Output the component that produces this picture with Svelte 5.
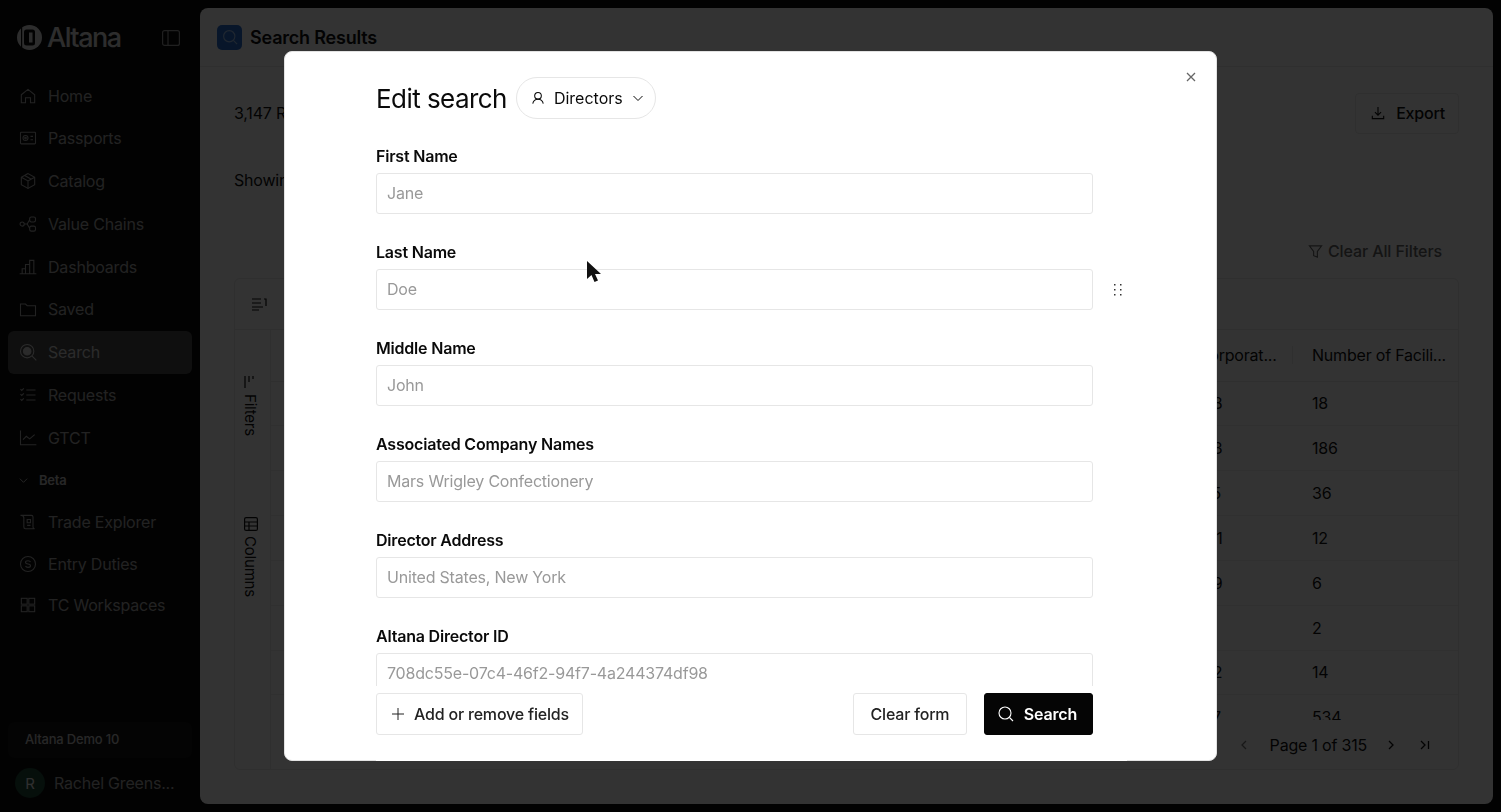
<script>
    const navTop = [
        { label: 'Home', icon: '<path d="M4 10.5 12 4l8 6.500V20h-5v-6H9v6H4z"/>' },
        { label: 'Passports', icon: '<rect x="3" y="5" width="18" height="14" rx="1"/><circle cx="9" cy="12" r="3"/><circle cx="9" cy="12" r="1"/><path d="M15 10h3M15 14h3"/>' },
        { label: 'Catalog', icon: '<path d="M12 3 4 7.500v9L12 21l8-4.500v-9z"/><path d="M4 7.500 12 12l8-4.500M12 12v9M8 5.300l8 4.500"/>' },
        { label: 'Value Chains', icon: '<circle cx="5" cy="12" r="2.500"/><rect x="14" y="3.500" width="7" height="6" rx="2"/><rect x="14" y="14.500" width="7" height="6" rx="2"/><path d="M7.500 12H11l3-5M11 12l3 5"/>' },
        { label: 'Dashboards', icon: '<path d="M2 20h20M5 20v-6h4v6M9 20V9h5v11M14 20V4h5v16"/>' },
        { label: 'Saved', icon: '<path d="M3 6h6l2 2h10v12H3z"/>' },
        { label: 'Search', active: true, icon: '<circle cx="11" cy="11" r="8"/><circle cx="11" cy="11" r="4.500" fill="currentColor"/><path d="m17 17 5 5"/>' },
        { label: 'Requests', icon: '<path d="M10 6h11M10 12h11M10 18h11M3 5l1.500 1.500L7 4M3 11l1.500 1.500L7 10M3 17l1.500 1.500L7 16"/>' },
        { label: 'GTCT', icon: '<path d="M3 3v17h19"/><path d="m6 14 4-4 4 3 6-5"/>' }
    ];
    const navBeta = [
        { label: 'Trade Explorer', icon: '<path d="M3 4h13a2 2 0 0 1 2 2v12a2 2 0 0 0 2 2H9a2 2 0 0 1-2-2V7a3 3 0 0 0-3-3M11 9h4v4h-4zM11 16h4"/>' },
        { label: 'Entry Duties', icon: '<circle cx="12" cy="12" r="9"/><path d="M15 9.500c-.5-1-1.500-1.500-3-1.500-2 0-3 .8-3 2s1 1.800 3 2 3 .8 3 2-1 2-3 2c-1.500 0-2.500-.5-3-1.500"/>' },
        { label: 'TC Workspaces', icon: '<rect x="4" y="4" width="7" height="7"/><rect x="13" y="4" width="7" height="7"/><rect x="4" y="13" width="7" height="7"/><rect x="13" y="13" width="7" height="7"/>' }
    ];
    const rows = [
        ['1968', '18'], ['1983', '186'], ['1975', '36'], ['2001', '12'],
        ['1999', '6'], ['N/A', '2'], ['2012', '14'], ['1977', '534']
    ];
    const fields = [
        { label: 'First Name', placeholder: 'Jane' },
        { label: 'Last Name', placeholder: 'Doe', handle: true },
        { label: 'Middle Name', placeholder: 'John' },
        { label: 'Associated Company Names', placeholder: 'Mars Wrigley Confectionery' },
        { label: 'Director Address', placeholder: 'United States, New York' },
        { label: 'Altana Director ID', placeholder: '708dc55e-07c4-46f2-94f7-4a244374df98' }
    ];
</script>

<div class="app">
    <aside class="sidebar">
        <div class="brand">
            <svg class="logo" viewBox="0 0 25 25" width="25" height="25">
                <circle cx="12.500" cy="12.500" r="12.500" fill="#e2e2e2"/>
                <rect x="7" y="4.500" width="11" height="16" rx="2.500" fill="#0c0c0c"/>
                <rect x="12" y="7.500" width="3.500" height="10" fill="#e2e2e2"/>
                <rect x="4" y="0" width="1.200" height="25" fill="#0c0c0c"/>
            </svg>
            <span class="wordmark">Altana</span>
            <svg class="toggle" viewBox="0 0 18 16" width="18" height="16" fill="none" stroke="currentColor" stroke-width="1.200">
                <rect x="0.600" y="0.600" width="16.800" height="14.800" rx="2"/>
                <path d="M6 1v14"/>
            </svg>
        </div>
        <nav class="nav">
            {#each navTop as item}
                <div class="nav-item" class:active={item.active}>
                    <svg viewBox="0 0 24 24" width="20" height="20" fill="none" stroke="currentColor" stroke-width="1.300">{@html item.icon}</svg>
                    <span>{item.label}</span>
                </div>
            {/each}
            <div class="nav-group">
                <svg viewBox="0 0 12 12" width="11" height="11" fill="none" stroke="currentColor" stroke-width="1"><path d="m2 4 4 4 4-4"/></svg>
                <span>Beta</span>
            </div>
            {#each navBeta as item}
                <div class="nav-item beta">
                    <svg viewBox="0 0 24 24" width="20" height="20" fill="none" stroke="currentColor" stroke-width="1.300">{@html item.icon}</svg>
                    <span>{item.label}</span>
                </div>
            {/each}
        </nav>
        <div class="side-foot">
            <div class="org">Altana Demo 10</div>
            <div class="user">
                <span class="avatar">R</span>
                <span class="user-name">Rachel Greens...</span>
            </div>
        </div>
    </aside>

    <main class="panel">
        <header class="panel-head">
            <span class="head-icon">
                <svg viewBox="0 0 24 24" width="18" height="18" fill="none" stroke="#9fc2ee" stroke-width="1.500"><circle cx="11" cy="11" r="7.500"/><path d="m16.500 16.500 5 5"/></svg>
            </span>
            <h1>Search Results</h1>
        </header>
        <div class="panel-body">
            <div class="results-row">
                <span class="results-count">3,147 Results</span>
                <button class="export">
                    <svg viewBox="0 0 16 16" width="14" height="14" fill="none" stroke="currentColor" stroke-width="1.300"><path d="M8 1v9M4.500 7 8 10.500 11.500 7M1.500 11v3.500h13V11"/></svg>
                    Export
                </button>
            </div>
            <div class="showing">Showing 1 to 10 of 3,147</div>
            <div class="filters-row">
                <span class="clear-filters">
                    <svg viewBox="0 0 16 16" width="15" height="15" fill="none" stroke="currentColor" stroke-width="1.200"><path d="M1.500 2h13L10 8v6l-4-1.500V8z"/></svg>
                    Clear All Filters
                </span>
            </div>
            <section class="table">
                <div class="table-tools">
                    <svg viewBox="0 0 16 16" width="16" height="16" fill="none" stroke="currentColor" stroke-width="1.200"><path d="M1 3h9M1 7h9M1 11h11M1 14h7M13 3h2v7"/></svg>
                </div>
                <div class="table-main">
                    <div class="rail">
                        <div class="rail-tab filters">
                            <svg viewBox="0 0 14 14" width="14" height="14" fill="none" stroke="currentColor" stroke-width="1.200"><path d="M1 1v12M5 1v6M9 1v3"/></svg>
                            Filters
                        </div>
                        <div class="rail-tab columns">
                            <svg viewBox="0 0 14 14" width="14" height="14" fill="none" stroke="currentColor" stroke-width="1.200"><rect x="0.600" y="0.600" width="12.800" height="12.800" rx="1.500"/><path d="M0.600 5h12.800M5 5v8.400M0.600 9h12.800"/></svg>
                            Columns
                        </div>
                    </div>
                    <div class="grid">
                        <div class="row head">
                            <div class="cell year">Incorporat...</div>
                            <div class="cell count">Number of Facili...</div>
                        </div>
                        <div class="grid-body">
                            {#each rows as row}
                                <div class="row">
                                    <div class="cell year">{row[0]}</div>
                                    <div class="cell count">{row[1]}</div>
                                </div>
                            {/each}
                        </div>
                        <div class="pager">
                            <svg viewBox="0 0 12 12" width="12" height="12" fill="none" stroke="#777" stroke-width="1.300"><path d="M8 2 4 6l4 4"/></svg>
                            <span>Page 1 of 315</span>
                            <svg class="next" viewBox="0 0 12 12" width="12" height="12" fill="none" stroke="currentColor" stroke-width="1.300"><path d="m4 2 4 4-4 4"/></svg>
                            <svg class="last" viewBox="0 0 12 12" width="12" height="12" fill="none" stroke="currentColor" stroke-width="1.300"><path d="m2 2 4 4-4 4M9.500 2v8"/></svg>
                        </div>
                    </div>
                </div>
            </section>
        </div>
    </main>

    <div class="overlay">
        <div class="modal">
            <button class="close" aria-label="Close">
                <svg viewBox="0 0 10 10" width="10" height="10" fill="none" stroke="currentColor" stroke-width="1.300"><path d="m1 1 8 8M9 1 1 9"/></svg>
            </button>
            <div class="modal-scroll">
                <div class="modal-title">
                    <h2>Edit search</h2>
                    <button class="chip">
                        <svg viewBox="0 0 16 16" width="14" height="14" fill="none" stroke="currentColor" stroke-width="1.200"><circle cx="8" cy="5.500" r="3.800"/><path d="M2 14.500c.6-3 2.600-5 6-5s5.400 2 6 5"/></svg>
                        <span>Directors</span>
                        <svg viewBox="0 0 12 12" width="12" height="12" fill="none" stroke="currentColor" stroke-width="1"><path d="m1.500 4 4.500 4.500L10.500 4"/></svg>
                    </button>
                </div>
                {#each fields as field}
                    <div class="field">
                        <label for={field.label}>{field.label}</label>
                        <div class="field-row">
                            <input id={field.label} placeholder={field.placeholder} />
                            {#if field.handle}
                                <svg class="handle" viewBox="0 0 8 12" width="8" height="12" fill="#333">
                                    <rect x="0" y="0" width="1.500" height="1.500"/><rect x="6" y="0" width="1.500" height="1.500"/>
                                    <rect x="0" y="5" width="1.500" height="1.500"/><rect x="6" y="5" width="1.500" height="1.500"/>
                                    <rect x="0" y="10" width="1.500" height="1.500"/><rect x="6" y="10" width="1.500" height="1.500"/>
                                </svg>
                            {/if}
                        </div>
                    </div>
                {/each}
            </div>
            <div class="modal-foot">
                <button class="btn add">
                    <svg viewBox="0 0 14 14" width="14" height="14" fill="none" stroke="currentColor" stroke-width="1"><path d="M7 1v12M1 7h12"/></svg>
                    Add or remove fields
                </button>
                <span class="foot-space"></span>
                <button class="btn clear">Clear form</button>
                <button class="btn primary">
                    <svg viewBox="0 0 16 16" width="16" height="16" fill="none" stroke="currentColor" stroke-width="1.100"><circle cx="7" cy="7" r="6"/><path d="m11.500 11.500 3.500 3.500"/></svg>
                    Search
                </button>
            </div>
        </div>
        <svg class="cursor" viewBox="0 0 14 23" width="14" height="23" fill="#111"><path d="M0 0v18l4.500-4 3 7 3.500-1.500-3-6.500H14z"/></svg>
    </div>
</div>

<style>
    :global(body) {
        margin: 0;
        font-family: Inter, "Noto Sans", sans-serif;
        background: #0c0c0c;
    }

    button {
        font: inherit;
        letter-spacing: inherit;
        background: none;
        border: none;
        padding: 0;
        color: inherit;
    }

    .app {
        position: relative;
        display: flex;
        width: 1501px;
        height: 812px;
        overflow: hidden;
        background: #0c0c0c;
        letter-spacing: -0.2px;
    }

    /* sidebar */
    .sidebar {
        width: 200px;
        flex: none;
        display: flex;
        flex-direction: column;
        color: #ababab;
    }

    .brand {
        display: flex;
        align-items: center;
        height: 25px;
        padding: 25px 20px 0 17px;
    }

    .wordmark {
        margin-left: 5px;
        font-size: 27px;
        font-weight: 500;
        letter-spacing: -1.500px;
        color: #e2e2e2;
    }

    .toggle {
        margin-left: auto;
        color: #a0a0a0;
    }

    .nav {
        margin-top: 24.300px;
        padding: 0 8px;
    }

    .nav-item {
        display: flex;
        align-items: center;
        gap: 10px;
        height: 42.750px;
        padding-left: 10px;
        border-radius: 6px;
        font-size: 16px;
    }

    .nav-item.beta {
        height: 41.500px;
    }

    .nav-item.active {
        background: #4c4c4c;
        color: #d4d4d4;
    }

    .nav-item svg {
        flex: none;
    }

    .nav-group {
        display: flex;
        align-items: center;
        gap: 10px;
        height: 42.500px;
        padding-left: 10px;
        font-size: 13px;
        font-weight: 600;
        color: #c4c4c4;
    }

    .side-foot {
        margin-top: auto;
        padding: 0 8px 14px;
    }

    .org {
        height: 36px;
        line-height: 35px;
        padding-left: 17px;
        border-radius: 6px;
        background: #141414;
        font-size: 13px;
        font-weight: 500;
        color: #c4c4c4;
    }

    .user {
        display: flex;
        align-items: center;
        gap: 9px;
        margin-top: 10px;
        padding-left: 7px;
    }

    .avatar {
        width: 30px;
        height: 30px;
        border-radius: 50%;
        background: #1f4a38;
        display: grid;
        place-items: center;
        font-size: 15px;
        color: #e8e8e8;
    }

    .user-name {
        font-size: 16px;
        white-space: nowrap;
    }

    /* results panel */
    .panel {
        flex: 1;
        margin: 8px 8px 8px 0;
        background: #fff;
        border-radius: 8px;
        display: flex;
        flex-direction: column;
        color: #111;
        min-width: 0;
    }

    .panel-head {
        display: flex;
        align-items: center;
        gap: 8px;
        height: 59px;
        padding-left: 17px;
        border-bottom: 1px solid #e8e8e8;
        box-sizing: border-box;
    }

    .head-icon {
        width: 25px;
        height: 25px;
        border-radius: 5px;
        background: #2a6fd0;
        display: grid;
        place-items: center;
    }

    h1 {
        margin: 0;
        font-size: 18px;
        font-weight: 600;
    }

    .panel-body {
        flex: 1;
        display: flex;
        flex-direction: column;
        padding: 26px 34px 34px;
        min-height: 0;
    }

    .results-row {
        display: flex;
        justify-content: space-between;
        align-items: center;
        font-size: 16px;
        height: 41px;
    }

    .results-count {
        padding-bottom: 1px;
    }

    .export {
        display: flex;
        align-items: center;
        gap: 11px;
        height: 41px;
        padding: 0 13px 1px 15px;
        border: 1px solid #e8e8e8;
        border-radius: 4px;
        font-weight: 500;
        font-size: 16px;
    }

    .showing {
        margin-top: 34px;
        line-height: 24px;
        font-size: 16px;
    }

    .filters-row {
        margin-top: 40px;
        height: 38px;
        display: flex;
        justify-content: flex-end;
        align-items: center;
        padding-right: 17px;
    }

    .clear-filters {
        display: flex;
        align-items: center;
        gap: 5px;
        font-size: 16px;
        font-weight: 500;
        letter-spacing: -0.100px;
        color: #666;
    }

    .table {
        flex: 1;
        margin-top: 8px;
        border: 1px solid #e8e8e8;
        border-radius: 6px;
        display: flex;
        flex-direction: column;
        min-height: 0;
    }

    .table-tools {
        height: 51px;
        flex: none;
        display: flex;
        align-items: center;
        padding-left: 16px;
        border-bottom: 1px solid #e8e8e8;
        box-sizing: border-box;
    }

    .table-main {
        flex: 1;
        display: flex;
        min-height: 0;
    }

    .rail {
        width: 36px;
        flex: none;
        border-right: 1px solid #e8e8e8;
        box-sizing: border-box;
        padding-top: 45px;
    }

    .rail-tab {
        writing-mode: vertical-rl;
        display: flex;
        align-items: center;
        gap: 5px;
        font-size: 15px;
        margin-left: 6px;
    }

    .rail-tab.columns {
        margin-top: 81px;
    }

    .grid {
        flex: 1;
        display: flex;
        flex-direction: column;
        min-width: 0;
    }

    .grid-body {
        flex: 1;
        overflow: hidden;
        min-height: 0;
    }

    .row {
        display: flex;
        justify-content: flex-end;
        height: 44.850px;
        align-items: center;
        border-bottom: 1px solid #eee;
        box-sizing: border-box;
        font-size: 16px;
    }

    .row.head {
        height: 51.500px;
        flex: none;
        padding-bottom: 1px;
        border-bottom: 1px solid #e8e8e8;
    }

    .cell {
        padding-left: 19px;
        box-sizing: border-box;
        white-space: nowrap;
    }

    .cell.year {
        width: 124px;
    }

    .cell.count {
        width: 166px;
        padding-left: 20px;
    }

    .head .cell.count {
        border-left: 1px solid #e8e8e8;
        padding-left: 19px;
        line-height: 18px;
    }

    .pager {
        flex: none;
        height: 49px;
        display: flex;
        justify-content: flex-end;
        align-items: center;
        gap: 20px;
        padding-right: 27px;
        font-size: 16px;
    }

    .pager .next {
        margin-left: -2px;
    }

    .pager .last {
        margin-left: 2px;
    }

    /* modal */
    .overlay {
        position: absolute;
        inset: 0;
        background: rgba(0, 0, 0, 0.8);
        backdrop-filter: blur(0.65px);
        display: grid;
        place-items: center;
    }

    .modal {
        position: relative;
        width: 933px;
        height: 710px;
        box-sizing: border-box;
        background: #fff;
        border: 1px solid #e2e2e2;
        border-radius: 8px;
        display: flex;
        flex-direction: column;
        color: #0a0a0a;
    }

    .close {
        position: absolute;
        top: 20px;
        right: 20px;
        display: flex;
        color: #666;
    }

    .modal-scroll {
        height: 634px;
        flex: none;
        overflow: hidden;
        padding: 25px 0 0 91px;
        box-sizing: border-box;
    }

    .modal-title {
        display: flex;
        align-items: center;
        gap: 9px;
        height: 42px;
    }

    h2 {
        margin: 0;
        font-size: 26px;
        font-weight: 400;
        letter-spacing: -0.550px;
    }

    .chip {
        display: flex;
        align-items: center;
        gap: 9px;
        height: 42px;
        padding: 0 11px 0 14px;
        border: 1px solid #e6e6e6;
        border-radius: 21px;
        box-sizing: border-box;
        font-size: 16px;
        letter-spacing: 0;
    }

    .field {
        margin-top: 26px;
    }

    .modal-title + .field {
        margin-top: 25px;
    }

    label {
        display: block;
        font-size: 16px;
        font-weight: 600;
        line-height: 24px;
        margin-bottom: 5px;
    }

    .field-row {
        display: flex;
        align-items: center;
    }

    input {
        width: 717px;
        height: 41px;
        box-sizing: border-box;
        border: 1px solid #e6e6e6;
        border-radius: 3px;
        padding: 0 10px 2px;
        font: inherit;
        letter-spacing: inherit;
        font-size: 16px;
        background: #fff;
    }

    input::placeholder {
        color: #999;
        opacity: 1;
    }

    .handle {
        margin-left: 21px;
    }

    .modal-foot {
        position: relative;
        margin: 0 0 -1px 91px;
        width: 751px;
        flex: 1;
        box-sizing: border-box;
        background: #fff;
        padding: 7px 34px 0 0;
        display: flex;
        align-items: flex-start;
        gap: 17px;
    }

    .foot-space {
        flex: 1;
    }

    .btn {
        display: flex;
        align-items: center;
        gap: 9px;
        height: 42px;
        border: 1px solid #e6e6e6;
        border-radius: 3px;
        box-sizing: border-box;
        font-size: 16px;
        font-weight: 500;
        color: #222;
    }

    .btn.add {
        padding: 0 13px 0 14px;
    }

    .btn.clear {
        padding: 0 16.500px;
    }

    .btn.primary {
        background: #050505;
        border-color: #050505;
        color: #fff;
        font-weight: 600;
        gap: 10px;
        padding: 0 15px 0 13px;
    }

    .cursor {
        position: absolute;
        left: 587px;
        top: 261px;
    }
</style>
